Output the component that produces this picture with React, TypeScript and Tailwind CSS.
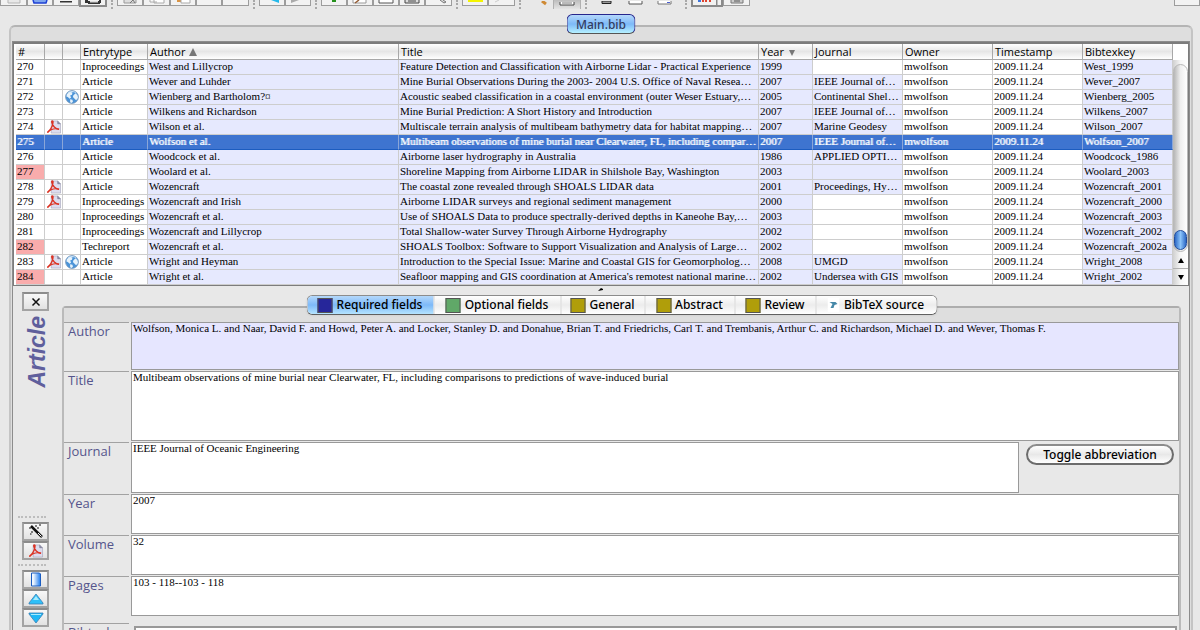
import { ReactNode, useState } from "react";
import clsx from "clsx";

const SANS = "font-['Lucida_Grande','Open_Sans','Noto_Sans',sans-serif]";
const CONTROL = "font-['Lucida_Grande','Noto_Sans',sans-serif] font-medium";
const SERIF = "font-['Liberation_Serif',serif]";

interface Entry {
  no: number;
  pdf?: boolean;
  web?: boolean;
  incomplete?: boolean;
  type: string;
  author: string;
  title: string;
  year: string;
  journal?: string;
  journalField?: boolean;
  key: string;
}

const entries: Entry[] = [
  { no: 270, type: "Inproceedings", author: "West and Lillycrop", title: "Feature Detection and Classification with Airborne Lidar - Practical Experience", year: "1999", key: "West_1999" },
  { no: 271, type: "Article", author: "Wever and Luhder", title: "Mine Burial Observations During the 2003- 2004 U.S. Office of Naval Resea…", year: "2007", journal: "IEEE Journal of…", key: "Wever_2007" },
  { no: 272, web: true, type: "Article", author: "Wienberg and Bartholom?¤", title: "Acoustic seabed classification in a coastal environment (outer Weser Estuary,…", year: "2005", journal: "Continental Shel…", key: "Wienberg_2005" },
  { no: 273, type: "Article", author: "Wilkens and Richardson", title: "Mine Burial Prediction: A Short History and Introduction", year: "2007", journal: "IEEE Journal of…", key: "Wilkens_2007" },
  { no: 274, pdf: true, type: "Article", author: "Wilson et al.", title: "Multiscale terrain analysis of multibeam bathymetry data for habitat mapping…", year: "2007", journal: "Marine Geodesy", key: "Wilson_2007" },
  { no: 275, type: "Article", author: "Wolfson et al.", title: "Multibeam observations of mine burial near Clearwater, FL, including compar…", year: "2007", journal: "IEEE Journal of…", key: "Wolfson_2007" },
  { no: 276, type: "Article", author: "Woodcock et al.", title: "Airborne laser hydrography in Australia", year: "1986", journal: "APPLIED OPTI…", key: "Woodcock_1986" },
  { no: 277, incomplete: true, type: "Article", author: "Woolard et al.", title: "Shoreline Mapping from Airborne LIDAR in Shilshole Bay, Washington", year: "2003", journalField: true, key: "Woolard_2003" },
  { no: 278, pdf: true, type: "Article", author: "Wozencraft", title: "The coastal zone revealed through SHOALS LIDAR data", year: "2001", journal: "Proceedings, Hy…", key: "Wozencraft_2001" },
  { no: 279, pdf: true, type: "Inproceedings", author: "Wozencraft and Irish", title: "Airborne LIDAR surveys and regional sediment management", year: "2000", key: "Wozencraft_2000" },
  { no: 280, type: "Inproceedings", author: "Wozencraft et al.", title: "Use of SHOALS Data to produce spectrally-derived depths in Kaneohe Bay,…", year: "2003", key: "Wozencraft_2003" },
  { no: 281, type: "Inproceedings", author: "Wozencraft and Lillycrop", title: "Total Shallow-water Survey Through Airborne Hydrography", year: "2002", key: "Wozencraft_2002" },
  { no: 282, incomplete: true, type: "Techreport", author: "Wozencraft et al.", title: "SHOALS Toolbox: Software to Support Visualization and Analysis of Large…", year: "2002", key: "Wozencraft_2002a" },
  { no: 283, pdf: true, web: true, type: "Article", author: "Wright and Heyman", title: "Introduction to the Special Issue: Marine and Coastal GIS for Geomorpholog…", year: "2008", journal: "UMGD", key: "Wright_2008" },
  { no: 284, incomplete: true, type: "Article", author: "Wright et al.", title: "Seafloor mapping and GIS coordination at America's remotest national marine…", year: "2002", journal: "Undersea with GIS", key: "Wright_2002" },
];

const columns = [
  { label: "#", width: "w-[29px]" },
  { label: "", width: "w-[18px]" },
  { label: "", width: "w-[18px]" },
  { label: "Entrytype", width: "w-[67px]" },
  { label: "Author", width: "w-[251px]", sort: "up" },
  { label: "Title", width: "" },
  { label: "Year", width: "w-[54px]", sort: "down" },
  { label: "Journal", width: "w-[90px]" },
  { label: "Owner", width: "w-[90px]" },
  { label: "Timestamp", width: "w-[90px]" },
  { label: "Bibtexkey", width: "w-[90px]" },
];

const tabs = [
  { label: "Required fields", width: "w-[126px]", color: "bg-[#26269a]" },
  { label: "Optional fields", width: "w-[127px]", color: "bg-[#60a868]" },
  { label: "General", width: "w-[84px]", color: "bg-[#b09e0a]" },
  { label: "Abstract", width: "w-[90px]", color: "bg-[#b09e0a]" },
  { label: "Review", width: "w-[81px]", color: "bg-[#b09e0a]" },
  { label: "BibTeX source", width: "w-[121px]", color: "" },
];

function PdfIcon() {
  return (
    <svg viewBox="0 0 16 15" className="block h-[14px] w-4">
      <path d="M5 1h7l3 3v10H5z" fill="#dcdcee" stroke="#a6a6bc" strokeWidth=".7" />
      <path d="M12 1v3h3" fill="#8f8fa8" stroke="#77778f" strokeWidth=".7" />
      <path d="M1 13.2C3.6 11.6 7 6.500 7 2c0-1.400-1.800-1.400-1.400.4C6.200 6 9.500 9.600 13.400 10" fill="none" stroke="#dc3324" strokeWidth="1.500" />
      <path d="M1 13.5c3-3.800 7.500-4.700 12.500-3.800" fill="none" stroke="#dc3324" strokeWidth="1.300" />
    </svg>
  );
}

function GlobeIcon() {
  return (
    <svg viewBox="0 0 15 15" className="block h-[14px] w-4">
      <circle cx="7.500" cy="7.500" r="6.900" fill="#4c94d8" stroke="#7795b5" strokeWidth=".8" />
      <path d="M2 4.500 5 2l3 .6L7.500 5 5.500 6l1 2-1.500 1.500L3 7.500 1.500 7zM9 5.500l2.500-2 2 2.500.4 2.500-2 2.500L10 9 8.500 7.500zM5.500 10l2.500.5.5 2L7 14l-1.500-1z" fill="#e8f3fb" />
      <path d="M3 3.500C5 1 10 1 12 3.500" stroke="#d5eafa" fill="none" />
    </svg>
  );
}

interface ToolProps {
  label: string;
  width?: string;
  look?: "box" | "plain" | "pressed" | "dark";
  children?: ReactNode;
}

/* Only the lower edge of the main toolbar is visible */
function Tool({ label, width = "w-[26px]", look = "box", children }: ToolProps) {
  return (
    <button
      aria-label={label}
      className={clsx(
        "shrink-0 overflow-hidden",
        width,
        look === "box" && "h-[6px] border border-t-0 border-[#9c9c9c] bg-[#f2f2f2]",
        look === "plain" && "h-[6px]",
        look === "pressed" && "h-[9px] border-x border-[#b0b0b0] bg-linear-to-b from-[#bdbdbd] to-[#e4e4e4]",
        look === "dark" && "h-[7px] border-2 border-t-0 border-[#8a8a8a] bg-[#f2f2f2]",
      )}
    >
      <svg viewBox="0 0 24 5" className="mx-auto block h-[5px] w-6">
        {children}
      </svg>
    </button>
  );
}

function Separator() {
  return <span className="mx-1 h-[9px] w-[2px] shrink-0 border-l-2 border-dotted border-[#a8a8a8]" />;
}

function MainToolbar() {
  return (
    <header className="flex h-[25px] items-start">
      <Tool label="New database" width="w-[27px]">
        <path d="M6 0v3h12V0" fill="#e8e8e8" stroke="#b5b5b5" />
      </Tool>
      <Tool label="Open">
        <path d="M5 0 6 3h12l1-3" fill="#7fa6ee" stroke="#1c3fd4" strokeWidth="1.500" />
      </Tool>
      <Tool label="Save">
        <path d="M6 1h12v1.500H6z" fill="#333" />
      </Tool>
      <Tool label="Save all" width="w-[28px]" look="dark">
        <path d="M4 0h3v3H4zM7 1h12v3H7zM18 0h2v3h-2z" fill="#333" />
        <path d="M9 1h8v1.500H9z" fill="#ddd" />
      </Tool>
      <Separator />
      <Tool label="Cut">
        <path d="M6 0v3h12V0" fill="#ddd" stroke="#999" />
        <path d="m12 3 3-3 2 3" fill="none" stroke="#777" />
      </Tool>
      <Tool label="Copy" width="w-[27px]">
        <path d="M5 0v2h7M9 0v3h10V0" fill="#fff" stroke="#aaa" />
      </Tool>
      <Tool label="Paste">
        <path d="M6 0v2h5V0" fill="#d99445" />
        <path d="M10 0v3h9V0" fill="#fff" stroke="#aaa" />
      </Tool>
      <Tool label="Undo" />
      <Tool label="Redo" width="w-[27px]" />
      <Separator />
      <Tool label="Back">
        <path d="M11 0h8v3z" fill="#25b9ea" />
      </Tool>
      <Tool label="Forward">
        <path d="M5 0h8l-8 3z" fill="#aaa" />
      </Tool>
      <Separator />
      <Tool label="New entry">
        <path d="M10 0h4v2h-4z" fill="#24911c" />
      </Tool>
      <Tool label="Edit entry">
        <path d="M5 0v3h13V0" fill="#fff" stroke="#999" />
        <path d="m7 3 4-3" stroke="#945c34" strokeWidth="1.500" />
      </Tool>
      <Tool label="Edit preamble">
        <path d="M5 0v3h14V0" fill="#fff" stroke="#555" />
      </Tool>
      <Tool label="Edit strings">
        <path d="M5 0v3h14V0" fill="#ddd" stroke="#444" />
        <path d="M8 1h8" stroke="#444" />
      </Tool>
      <Tool label="Autogenerate keys" width="w-[27px]">
        <path d="m13 0 4 3 2-1-3-2" fill="#ddd" stroke="#777" />
      </Tool>
      <Separator />
      <Tool label="Mark entries">
        <path d="M5 0h15v2H5z" fill="#f4f400" />
      </Tool>
      <Tool label="Unmark entries" width="w-[27px]">
        <path d="M5 2 9 0" stroke="#ccc" />
      </Tool>
      <Separator />
      <Tool label="Search" width="w-[28px]" look="plain">
        <path d="m15 0 4 3" stroke="#cf8a34" strokeWidth="3" />
      </Tool>
      <Tool label="Toggle preview" width="w-[28px]" look="pressed">
        <path d="M5 0v3h14V0" fill="#fff" stroke="#444" />
        <path d="M7 1h10" stroke="#777" />
      </Tool>
      <Separator />
      <Tool label="Write XMP" width="w-[32px]" look="plain">
        <path d="M7 0h9v2.500H7z" fill="#999" stroke="#222" />
      </Tool>
      <Tool label="Toggle groups" width="w-[28px]" look="plain">
        <path d="M4 0v3h13V0" fill="#fff" stroke="#555" />
      </Tool>
      <Tool label="Open folder" width="w-[30px]" look="plain">
        <path d="M4 0v3h13V0" fill="#fff" stroke="#777" />
        <path d="M13 1h3v1h-3z" fill="#4d5fd0" />
      </Tool>
      <Separator />
      <Tool label="Push to application" width="w-[32px]" look="dark">
        <path d="M3 0h3v2H3z" fill="#3d75dd" />
        <path d="M7 0h2v2H7zM10 0h2v2h-2zM14 0h2v2h-2z" fill="#e0432e" />
        <path d="M21 0h1.500v5H21z" fill="#8a8a8a" />
      </Tool>
      <Tool label="Settings" width="w-[27px]">
        <path d="M6 0v3h12V0" fill="#ccc" stroke="#777" />
        <path d="M9 1h6" stroke="#555" />
      </Tool>
      <span className="flex-1" />
      <Tool label="Donate" />
    </header>
  );
}

function EntryRow({ entry, selected, onSelect }: { entry: Entry; selected: boolean; onSelect: () => void }) {
  const cell = "h-[15px] overflow-hidden border-b border-r p-0 pl-px align-top whitespace-nowrap";
  const line = selected ? "border-b-[#1c5cc0] border-r-[#8aa6d8]" : "border-[#cdcdcd]";
  const white = clsx(cell, line, !selected && "bg-white");
  const required = clsx(cell, line, !selected && "bg-[#e6e9fe]");

  return (
    <tr onClick={onSelect} className={selected ? "bg-[#3e74d0] text-white [text-shadow:1px_0_0_#ffffffb0]" : "text-black"}>
      <td className={clsx(cell, line, !selected && (entry.incomplete ? "bg-[#f9acac]" : "bg-white"))}>{entry.no}</td>
      <td className={white}>{entry.pdf && <PdfIcon />}</td>
      <td className={white}>{entry.web && <GlobeIcon />}</td>
      <td className={white}>{entry.type}</td>
      <td className={required}>{entry.author}</td>
      <td className={required}>{entry.title}</td>
      <td className={required}>{entry.year}</td>
      <td className={entry.journal || entry.journalField ? required : white}>{entry.journal}</td>
      <td className={white}>mwolfson</td>
      <td className={white}>2009.11.24</td>
      <td className={required}>{entry.key}</td>
    </tr>
  );
}

function EntryTable() {
  const [selected, setSelected] = useState(275);

  return (
    <div className="flex border border-t-2 border-[#7c7c7c] bg-white pl-[2px]">
      <div className="min-w-0 flex-1">
        <table className="w-full table-fixed border-separate border-spacing-0">
          <thead className={clsx(SANS, "text-[11px] leading-[14px]")}>
            <tr>
              {columns.map((column, i) => (
                <th
                  key={i}
                  className={clsx(
                    "h-4 overflow-hidden border-r border-b border-[#a8a8a8] bg-linear-to-b from-white via-[#e6e6e6] to-white p-0 pl-[2px] text-left font-medium whitespace-nowrap",
                    column.width,
                  )}
                >
                  {column.label}
                  {column.sort && (
                    <svg viewBox="0 0 8 8" className="ml-1 inline-block h-2 w-2 align-baseline">
                      <path d={column.sort === "up" ? "M4 0 8 8H0z" : "M1 2h6L4 8z"} fill="#777" />
                    </svg>
                  )}
                </th>
              ))}
            </tr>
          </thead>
          <tbody className={clsx(SERIF, "text-[11px] leading-[12px]")}>
            {entries.map(entry => (
              <EntryRow key={entry.no} entry={entry} selected={entry.no === selected} onSelect={() => setSelected(entry.no)} />
            ))}
          </tbody>
        </table>
      </div>
      <div className="mt-4 flex w-[15px] flex-col bg-linear-to-r from-[#d0d0d0] via-[#f6f6f6] to-white">
        <div className="mt-1 flex flex-1 flex-col justify-end rounded-full border border-[#b8b8b8] bg-linear-to-r from-[#b8b8b8] via-[#efefef] to-white">
          <div className="mb-px h-5 rounded-full border border-[#224c9c] bg-linear-to-r from-[#2d68c6] via-[#8cc4fa] to-[#2d68c6]" />
        </div>
        <button aria-label="Scroll up" className="flex h-[17px] items-center justify-center border-b border-[#b0b0b0]">
          <svg viewBox="0 0 6 5" className="h-[5px] w-[6px]"><path d="M3 0 6 5H0z" /></svg>
        </button>
        <button aria-label="Scroll down" className="flex h-4 items-center justify-center">
          <svg viewBox="0 0 6 5" className="h-[5px] w-[6px]"><path d="M0 0h6L3 5z" /></svg>
        </button>
      </div>
    </div>
  );
}

function SideButton({ label, children }: { label: string; children: ReactNode }) {
  return (
    <button
      aria-label={label}
      className="flex h-[19px] w-[27px] items-center justify-center border-2 border-[#a3a3a3] border-t-[#8c8c8c] bg-linear-to-b from-[#f8f8f8] to-[#e2e2e2]"
    >
      {children}
    </button>
  );
}

function SideBar() {
  return (
    <aside className="flex w-[49px] shrink-0 flex-col pl-[9px]">
      <div className="mt-[6px]">
        <SideButton label="Close">
          <svg viewBox="0 0 10 10" className="h-[10px] w-[10px]">
            <path d="m1.500 1.500 7 7M8.500 1.500l-7 7" stroke="#111" strokeWidth="1.500" />
          </svg>
        </SideButton>
      </div>
      <span className="mt-[5px] ml-[2px] w-[27px] rotate-180 font-['Liberation_Sans',sans-serif] text-[23px] leading-[27px] font-bold text-[#5f5f9c] italic [writing-mode:vertical-rl]">
        Article
      </span>
      <div className="mt-auto mb-[3px] flex flex-col">
        <span className="mb-1 -ml-1 w-7 border-t-2 border-dotted border-[#bdbdbd]" />
        <SideButton label="Autogenerate key">
          <svg viewBox="0 0 16 15" className="h-[15px] w-4">
            <path d="m3 2 11 11" stroke="#111" strokeWidth="2.500" />
            <path d="m10 9 3.500 3.500" stroke="#fff" strokeWidth="1" />
            <path d="M1 4h2M7 2h2M11 1h2M4 7v2M2 10h1.500M9 4h2" stroke="#111" />
          </svg>
        </SideButton>
        <SideButton label="Write PDF metadata">
          <PdfIcon />
        </SideButton>
        <span className="mt-1 mb-1 -ml-1 w-7 border-t-2 border-dotted border-[#bdbdbd]" />
        <SideButton label="Open file">
          <svg viewBox="0 0 12 15" className="h-[15px] w-3">
            <defs>
              <linearGradient id="page">
                <stop offset=".2" stopColor="#f2f8ff" />
                <stop offset="1" stopColor="#1e7cf0" />
              </linearGradient>
            </defs>
            <path d="M1.500 1h8l1 1v12h-9z" fill="url(#page)" stroke="#1a5cc0" />
          </svg>
        </SideButton>
        <SideButton label="Previous entry">
          <svg viewBox="0 0 16 12" className="h-3 w-4">
            <path d="m8 1 7 9v1H1v-1z" fill="#2fc0f8" stroke="#3c7fb4" strokeWidth=".8" />
            <path d="m8 3 3 4H5z" fill="#a8ecff" />
          </svg>
        </SideButton>
        <SideButton label="Next entry">
          <svg viewBox="0 0 16 12" className="h-3 w-4">
            <path d="M1 1h14v1l-7 9-7-9z" fill="#1fb8f6" stroke="#3c7fb4" strokeWidth=".8" />
            <path d="M3 2.500h10" stroke="#a8ecff" />
          </svg>
        </SideButton>
      </div>
    </aside>
  );
}

interface FieldProps {
  label: string;
  height: string;
  value: string;
  required?: boolean;
  children?: ReactNode;
}

function Field({ label, height, value, required, children }: FieldProps) {
  const id = `field-${label.toLowerCase()}`;
  return (
    <div className={clsx("flex shrink-0 gap-[2px]", height)}>
      <label htmlFor={id} className={clsx(SANS, "w-[65px] shrink-0 border-t border-[#a2a2a2] pl-1 text-[13px] leading-[16px] text-[#55558c]")}>
        {label}
      </label>
      <textarea
        id={id}
        defaultValue={value}
        className={clsx(
          SERIF,
          "mb-px block min-w-0 flex-1 resize-none overflow-hidden border border-[#999] pl-px text-[11px] leading-[11px] text-black outline-none",
          required ? "bg-[#e6e6ff]" : "bg-white",
        )}
      />
      {children}
    </div>
  );
}

function EditorTabs() {
  const [active, setActive] = useState("Required fields");

  return (
    <div
      className={clsx(
        CONTROL,
        "absolute -top-[13px] left-1/2 flex h-5 -translate-x-1/2 overflow-hidden rounded-md border border-[#8c8c8c] border-b-[#606060] bg-white text-[12px] shadow-xs",
      )}
    >
      {tabs.map(tab => (
        <button
          key={tab.label}
          onClick={() => setActive(tab.label)}
          className={clsx(
            "flex items-center justify-center gap-1 border-l border-[#d4d4d4] whitespace-nowrap first:border-l-0",
            tab.width,
            tab.label === active ? "bg-linear-to-b from-[#b4d8fb] via-[#7db9f8] to-[#b5e4ff]" : "bg-linear-to-b from-white via-[#ececec] to-white",
          )}
        >
          {tab.color ? (
            <span className={clsx("h-[15px] w-[15px] shrink-0 border border-[#555]", tab.color)} />
          ) : (
            <svg viewBox="0 0 12 14" className="h-[14px] w-3 shrink-0">
              <path d="M0 0h12v14H0z" fill="#fff" />
              <path d="M2 4h6l2 2-3 1-1 3H3l2-4z" fill="#4688a8" />
            </svg>
          )}
          {tab.label}
        </button>
      ))}
    </div>
  );
}

function EntryEditor() {
  return (
    <section className="relative mt-[20px] mr-[8px] flex min-w-0 flex-1 flex-col rounded-t border-2 border-b-0 border-[#bababa] border-t-[#adadad] bg-[#e8e8e8]">
      <EditorTabs />
      <div className="h-[14px] shrink-0 bg-[#dedede]" />
      <Field
        label="Author"
        height="h-[49px]"
        required
        value="Wolfson, Monica L. and Naar, David F. and Howd, Peter A. and Locker, Stanley D. and Donahue, Brian T. and Friedrichs, Carl T. and Trembanis, Arthur C. and Richardson, Michael D. and Wever, Thomas F."
      />
      <Field
        label="Title"
        height="h-[71px]"
        value="Multibeam observations of mine burial near Clearwater, FL, including comparisons to predictions of wave-induced burial"
      />
      <Field label="Journal" height="h-[52px]" value="IEEE Journal of Oceanic Engineering">
        <div className="shrink-0 px-[5px] pt-[2px]">
          <button
            className={clsx(
              CONTROL,
              "block h-[21px] w-[148px] rounded-full border-2 border-[#6c6c6c] border-t-[#8c8c8c] bg-linear-to-b from-white via-[#e8e8e8] to-white text-[12px] leading-[16px]",
            )}
          >
            Toggle abbreviation
          </button>
        </div>
      </Field>
      <Field label="Year" height="h-[41px]" value="2007" />
      <Field label="Volume" height="h-[41px]" value="32" />
      <Field label="Pages" height="h-[41px]" value="103 - 118--103 - 118" />
      <div className="mt-[6px] flex gap-[5px]">
        <label htmlFor="bibtexkey" className={clsx(SANS, "w-[65px] shrink-0 border-t border-[#a2a2a2] pl-1 text-[13px] leading-[16px] text-[#55558c]")}>
          Bibtexkey
        </label>
        <input
          id="bibtexkey"
          defaultValue="Wolfson_2007"
          className={clsx(SERIF, "mt-[3px] mr-[2px] h-5 min-w-0 flex-1 border-2 border-[#999] bg-white px-1 text-[11px] outline-none")}
        />
      </div>
    </section>
  );
}

export default function App() {
  return (
    <div className="flex h-screen flex-col overflow-hidden bg-[#e8e8e8] text-black">
      <MainToolbar />
      <main className="relative mr-[7px] ml-[9px] flex min-h-0 flex-1 flex-col rounded-t-md border-2 border-b-0 border-[#c4c4c4] border-t-[#b4b4b4] bg-[#dedede] pt-[14px]">
        <button
          className={clsx(
            CONTROL,
            "absolute -top-[13px] left-1/2 h-5 w-[69px] -translate-x-1/2 rounded-md border border-[#26268c] border-b-[#555] bg-linear-to-b from-[#b4d8fb] via-[#7db9f8] to-[#b5f0ff] text-[12px] leading-[17px] text-[#333c60]",
          )}
        >
          Main.bib
        </button>
        <div className="mx-px flex min-h-0 flex-1 flex-col border border-b-0 border-[#8c8c8c] bg-[#e8e8e8]">
          <EntryTable />
          <div className="relative flex min-h-0 flex-1">
            <svg viewBox="0 0 6 3" className="absolute top-[2px] left-1/2 h-[3px] w-[6px] -translate-x-1/2">
              <path d="M0 3 3 0l2 1v1z" />
            </svg>
            <SideBar />
            <EntryEditor />
          </div>
        </div>
      </main>
    </div>
  );
}
